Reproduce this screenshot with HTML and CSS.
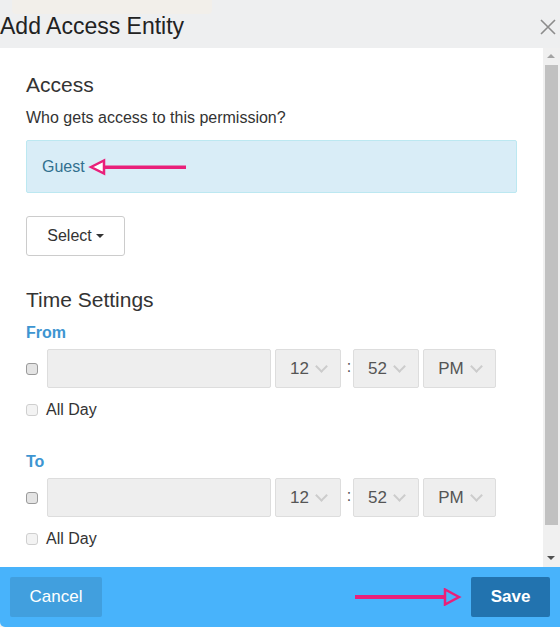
FILE: index.html
```html
<!DOCTYPE html>
<html lang="en">
<head>
    <meta charset="UTF-8">
    <title>Add Access Entity</title>
    <link rel="stylesheet" href="styles.css">
</head>
<body>
    <div class="dialog">
        <div class="titlebar">
            <div class="glow"></div>
            <h2 class="dialog-title">Add Access Entity</h2>
            <svg class="close" width="18" height="18" viewBox="0 0 18 18">
                <path d="M2 2 L16 16 M16 2 L2 16" stroke="#8c8c8c" stroke-width="1.6" fill="none"/>
            </svg>
        </div>

        <div class="dialog-body">
            <div class="content">
                <h3 class="section-title first">Access</h3>
                <p class="hint">Who gets access to this permission?</p>
                <div class="alert">
                    <span>Guest</span>
                    <svg class="arrow-left" width="100" height="18" viewBox="0 0 100 18">
                        <polygon points="3,9 16,2.5 16,15.5" fill="#fff" stroke="#e9207a" stroke-width="2.5" stroke-linejoin="miter"/>
                        <rect x="17" y="7.5" width="81" height="3.5" fill="#e9207a"/>
                    </svg>
                </div>
                <button class="select-btn">Select <span class="caret"></span></button>

                <h3 class="section-title time">Time Settings</h3>

                <div class="label from">From</div>
                <div class="time-row">
                    <span class="check dark"></span>
                    <div class="date-input"></div>
                    <div class="pick hour">12 <span class="chev"></span></div>
                    <span class="colon">:</span>
                    <div class="pick minute">52 <span class="chev"></span></div>
                    <div class="pick ampm">PM <span class="chev"></span></div>
                </div>
                <div class="allday"><span class="check"></span>All Day</div>

                <div class="label to">To</div>
                <div class="time-row">
                    <span class="check dark"></span>
                    <div class="date-input"></div>
                    <div class="pick hour">12 <span class="chev"></span></div>
                    <span class="colon">:</span>
                    <div class="pick minute">52 <span class="chev"></span></div>
                    <div class="pick ampm">PM <span class="chev"></span></div>
                </div>
                <div class="allday"><span class="check"></span>All Day</div>
            </div>

            <div class="scrollbar">
                <span class="sb-up"></span>
                <div class="sb-thumb"></div>
                <span class="sb-down"></span>
            </div>
        </div>

        <div class="footer">
            <button class="btn cancel">Cancel</button>
            <div class="footer-right">
                <svg class="arrow-right" width="108" height="18" viewBox="0 0 108 18">
                    <rect x="0" y="7" width="90" height="4" fill="#e9207a"/>
                    <polygon points="104,9 90,1.5 90,16.5" fill="#48b3fb" stroke="#e9207a" stroke-width="2.5"/>
                </svg>
                <button class="btn save">Save</button>
            </div>
        </div>
    </div>
</body>
</html>
```

FILE: styles.css
```css
/* Reset */
* {
    margin: 0;
    padding: 0;
    box-sizing: border-box;
}

body {
    font-family: 'Liberation Sans', Arial, sans-serif;
    background-color: #eeeff0;
    color: #333333;
    width: 560px;
    height: 627px;
    overflow: hidden;
}

.dialog {
    display: flex;
    flex-direction: column;
    height: 627px;
}

/* Title bar */
.titlebar {
    position: relative;
    height: 48px;
    display: flex;
    align-items: center;
    justify-content: space-between;
}

.glow {
    position: absolute;
    left: 12px;
    top: 0;
    width: 200px;
    height: 14px;
    background-color: #f2efea;
    border-radius: 0 0 4px 4px;
}

.dialog-title {
    position: relative;
    font-weight: 400;
    font-size: 23px;
    color: #222222;
    margin-top: 5px;
}

.close {
    margin-right: 3px;
    margin-top: 6px;
}

/* Body */
.dialog-body {
    display: flex;
    height: 519px;
}

.content {
    width: 543px;
    background-color: #ffffff;
    padding: 0 26px;
}

.section-title {
    font-size: 21px;
    font-weight: 400;
    line-height: 22px;
    color: #333333;
}

.section-title.first {
    margin-top: 26px;
}

.section-title.time {
    margin-top: 33px;
}

.hint {
    font-size: 16px;
    line-height: 22px;
    margin-top: 11px;
    color: #333333;
}

.alert {
    margin-top: 11px;
    height: 53px;
    width: 491px;
    background-color: #d9edf7;
    border: 1px solid #bce8f1;
    border-radius: 2px;
    padding-left: 15px;
    display: flex;
    align-items: center;
    font-size: 16px;
    color: #31708f;
}

.arrow-left {
    margin-left: 3px;
    margin-top: 1px;
}

.select-btn {
    display: flex;
    align-items: center;
    justify-content: center;
    margin-top: 23px;
    width: 99px;
    height: 40px;
    background-color: #ffffff;
    border: 1px solid #cccccc;
    border-radius: 3px;
    font-family: 'Liberation Sans', Arial, sans-serif;
    font-size: 16px;
    color: #333333;
}

.caret {
    display: inline-block;
    margin-left: 4px;
    border-top: 4px solid #333333;
    border-left: 4px solid transparent;
    border-right: 4px solid transparent;
}

.label {
    font-size: 16px;
    font-weight: 700;
    line-height: 22px;
    color: #3d95d1;
}

.label.from {
    margin-top: 11px;
}

.label.to {
    margin-top: 30px;
}

.time-row {
    display: flex;
    align-items: center;
    margin-top: 5px;
    height: 39px;
}

.check {
    display: inline-block;
    width: 12px;
    height: 12px;
    border: 1px solid #cfcfcf;
    border-radius: 3px;
    background-color: #f3f3f3;
}

.check.dark {
    border-color: #9a9a9a;
    background-color: #e4e4e4;
}

.date-input {
    margin-left: 9px;
    width: 224px;
    height: 39px;
    background-color: #eeeeee;
    border: 1px solid #dddddd;
    border-radius: 2px;
}

.pick {
    display: flex;
    align-items: center;
    justify-content: center;
    height: 39px;
    background-color: #eeeeee;
    border: 1px solid #dddddd;
    border-radius: 2px;
    font-size: 17px;
    color: #555555;
    margin-left: 4px;
}

.pick.hour,
.pick.minute {
    width: 66px;
}

.pick.ampm {
    width: 73px;
}

.chev {
    display: inline-block;
    width: 9px;
    height: 9px;
    margin-left: 8px;
    margin-top: -5px;
    border-right: 2.5px solid #cccccc;
    border-bottom: 2.5px solid #cccccc;
    transform: rotate(45deg);
}

.colon {
    width: 8px;
    margin-left: 4px;
    margin-right: -4px;
    text-align: center;
    font-size: 16px;
    color: #555555;
    margin-top: -4px;
}

.allday {
    display: flex;
    align-items: center;
    margin-top: 11px;
    line-height: 22px;
    font-size: 16px;
    color: #333333;
}

.allday .check {
    margin-right: 8px;
}

/* Scrollbar */
.scrollbar {
    position: relative;
    width: 17px;
    background-color: #f0f0f0;
}

.sb-up,
.sb-down {
    position: absolute;
    left: 4px;
    border-left: 4px solid transparent;
    border-right: 4px solid transparent;
}

.sb-up {
    top: 6px;
    border-bottom: 4px solid #a3a3a3;
}

.sb-down {
    bottom: 7px;
    border-top: 4px solid #505050;
}

.sb-thumb {
    position: absolute;
    left: 2px;
    top: 17px;
    width: 13px;
    height: 460px;
    background-color: #c1c1c1;
}

/* Footer */
.footer {
    height: 60px;
    background-color: #48b3fb;
    border-radius: 0 0 0 5px;
    display: flex;
    align-items: center;
    justify-content: space-between;
    padding: 0 10px;
}

.footer-right {
    display: flex;
    align-items: center;
}

.arrow-right {
    margin-right: 8px;
}

.btn {
    height: 40px;
    border: none;
    border-radius: 2px;
    color: #ffffff;
    font-family: 'Liberation Sans', Arial, sans-serif;
    font-size: 17px;
}

.cancel {
    width: 92px;
    background-color: #419fde;
}

.save {
    width: 79px;
    background-color: #2273af;
    font-weight: 700;
}
```
